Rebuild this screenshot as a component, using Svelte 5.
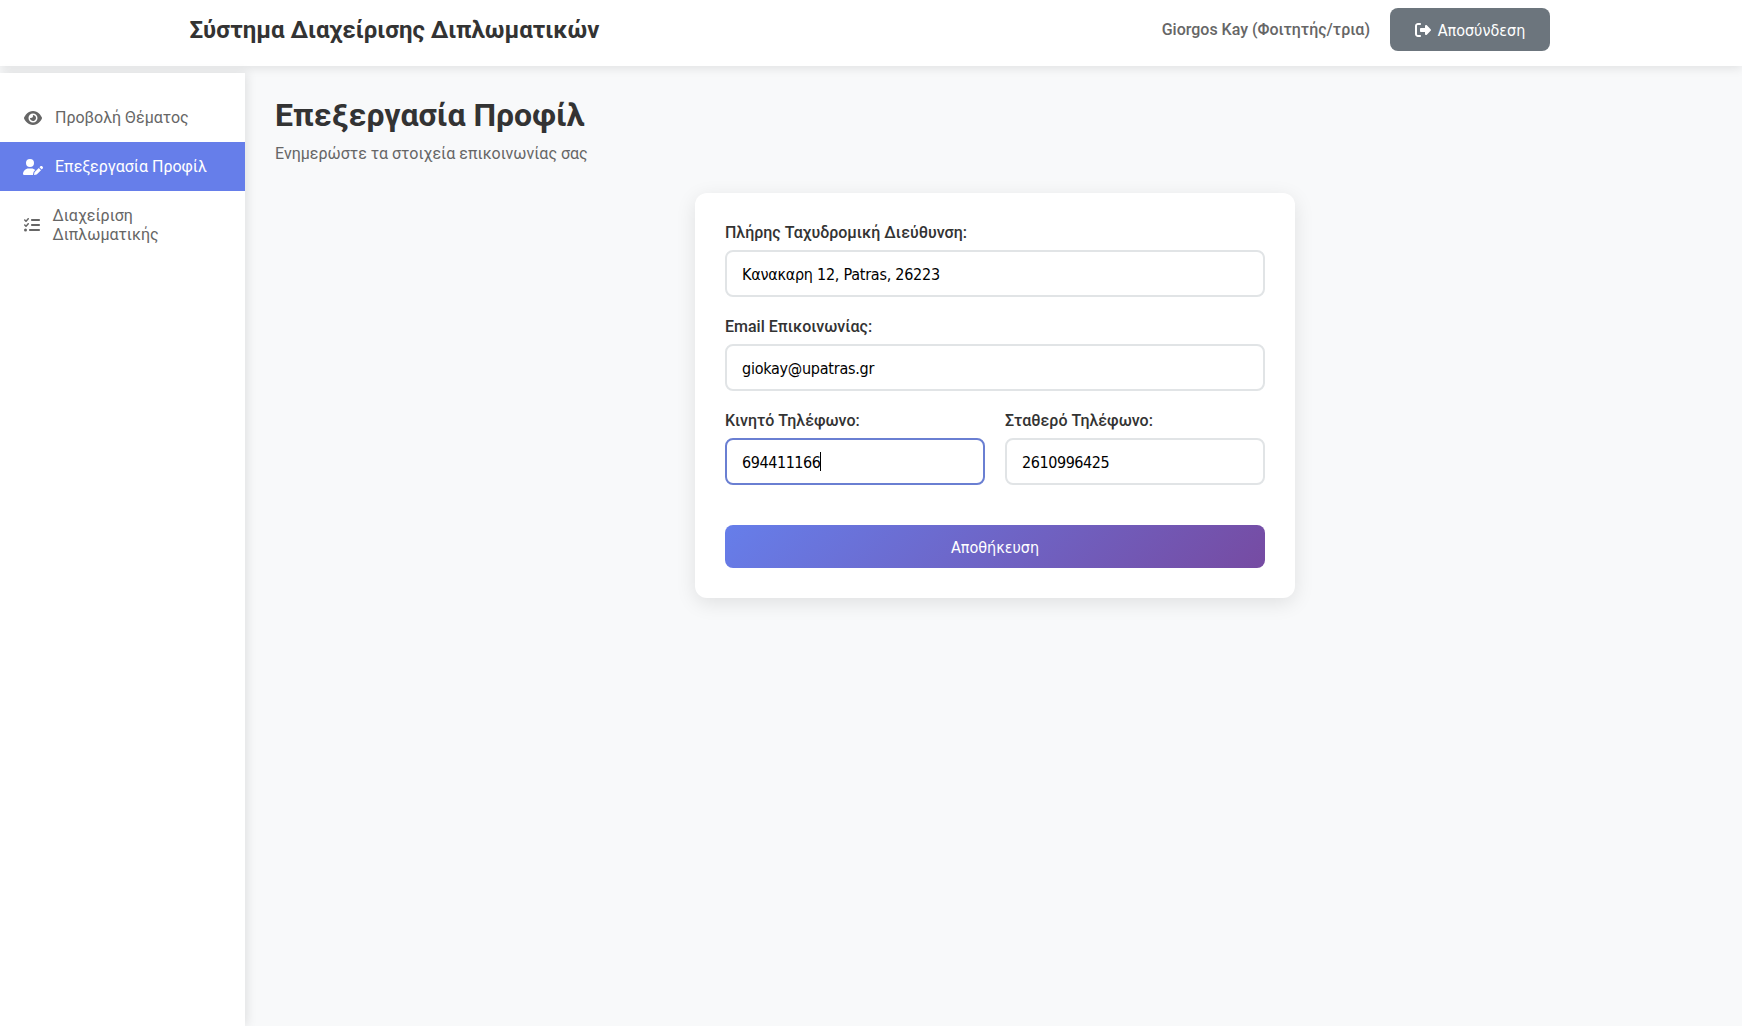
<script>
  const icons = {
    eye: {
      box: '0 0 576 512', w: 18,
      d: 'M288 32c-80.8 0-145.5 36.8-192.6 80.6C48.6 156 17.3 208 2.5 243.7c-3.3 7.9-3.3 16.7 0 24.6C17.3 304 48.6 356 95.4 399.4C142.5 443.2 207.2 480 288 480s145.5-36.8 192.6-80.6c46.8-43.5 78.1-95.4 93-131.1c3.3-7.9 3.3-16.7 0-24.6c-14.9-35.7-46.2-87.7-93-131.1C433.5 68.8 368.8 32 288 32zM144 256a144 144 0 1 1 288 0 144 144 0 1 1 -288 0zm144-64c0 35.3-28.7 64-64 64c-7.1 0-13.9-1.2-20.3-3.3c-5.5-1.8-11.9 1.6-11.7 7.4c.3 6.9 1.3 13.8 3.2 20.7c13.7 51.2 66.4 81.6 117.6 67.9s81.6-66.4 67.9-117.6c-11.1-41.5-47.8-69.4-88.6-71.1c-5.8-.2-9.2 6.1-7.4 11.7c2.1 6.4 3.3 13.2 3.3 20.3z'
    },
    userPen: {
      box: '0 0 640 512', w: 20,
      d: 'M224 256A128 128 0 1 0 224 0a128 128 0 1 0 0 256zm-45.7 48C79.8 304 0 383.8 0 482.3C0 498.7 13.3 512 29.7 512H322.8c-3.1-8.8-3.7-18.4-1.4-27.8l15-60.1c2.8-11.3 8.6-21.5 16.8-29.7l40.3-40.3c-32.1-31-75.7-50.1-123.9-50.1H178.3zm435.5-68.3c-15.6-15.6-40.9-15.6-56.6 0l-29.4 29.4 71 71 29.4-29.4c15.6-15.6 15.6-40.9 0-56.6l-14.4-14.4zM375.9 417c-4.1 4.1-7 9.2-8.4 14.9l-15 60.1c-1.4 5.5 .2 11.2 4.2 15.2s9.7 5.6 15.2 4.2l60.1-15c5.6-1.4 10.8-4.3 14.9-8.4L576.1 358.7l-71-71L375.9 417z'
    },
    list: {
      box: '0 0 512 512', w: 16,
      d: 'M152.1 38.2c9.9 8.9 10.7 24 1.8 33.9l-72 80c-4.4 4.9-10.6 7.8-17.2 7.9s-12.9-2.4-17.6-7L7 113C-2.3 103.6-2.3 88.4 7 79s24.6-9.4 33.9 0l22.1 22.1 55.1-61.2c8.9-9.9 24-10.7 33.9-1.8zm0 160c9.9 8.9 10.7 24 1.8 33.9l-72 80c-4.4 4.9-10.6 7.8-17.2 7.9s-12.9-2.4-17.6-7L7 273c-9.4-9.4-9.4-24.6 0-33.9s24.6-9.4 33.9 0l22.1 22.1 55.1-61.2c8.9-9.9 24-10.7 33.9-1.8zM224 96c0-17.7 14.3-32 32-32H480c17.7 0 32 14.3 32 32s-14.3 32-32 32H256c-17.7 0-32-14.3-32-32zm0 160c0-17.7 14.3-32 32-32H480c17.7 0 32 14.3 32 32s-14.3 32-32 32H256c-17.7 0-32-14.3-32-32zM160 416c0-17.7 14.3-32 32-32H480c17.7 0 32 14.3 32 32s-14.3 32-32 32H192c-17.7 0-32-14.3-32-32zM48 368a48 48 0 1 1 0 96 48 48 0 1 1 0-96z'
    },
    logout: {
      box: '0 0 512 512', w: 16,
      d: 'M377.9 105.9L500.7 228.7c7.2 7.2 11.3 17.1 11.3 27.3s-4.1 20.1-11.3 27.3L377.9 406.1c-6.4 6.4-15 9.9-24 9.9c-18.7 0-33.9-15.2-33.9-33.9l0-62.1-128 0c-17.7 0-32-14.3-32-32l0-64c0-17.7 14.3-32 32-32l128 0 0-62.1c0-18.7 15.2-33.9 33.9-33.9c9 0 17.6 3.6 24 9.9zM160 96L96 96c-17.7 0-32 14.3-32 32l0 256c0 17.7 14.3 32 32 32l64 0c17.7 0 32 14.3 32 32s-14.3 32-32 32l-64 0c-53 0-96-43-96-96L0 128C0 75 43 32 96 32l64 0c17.7 0 32 14.3 32 32s-14.3 32-32 32z'
    }
  };

  const nav = [
    { icon: 'eye', label: 'Προβολή Θέματος' },
    { icon: 'userPen', label: 'Επεξεργασία Προφίλ', active: true },
    { icon: 'list', label: 'Διαχείριση Διπλωματικής', narrow: true }
  ];

  let address = $state('Κανακαρη 12, Patras, 26223');
  let email = $state('giokay@upatras.gr');
  let mobile = $state('694411166');
  let landline = $state('2610996425');
</script>

{#snippet glyph(name)}
  <svg viewBox={icons[name].box} width={icons[name].w} height="16" fill="currentColor" aria-hidden="true">
    <path d={icons[name].d} />
  </svg>
{/snippet}

<div class="page">
  <header>
    <div class="bar">
      <h2>Σύστημα Διαχείρισης Διπλωματικών</h2>
      <div class="user">
        <span class="name">Giorgos Kay (Φοιτητής/τρια)</span>
        <button class="logout">{@render glyph('logout')}<span>Αποσύνδεση</span></button>
      </div>
    </div>
  </header>

  <div class="body">
    <nav>
      {#each nav as item}
        <a href="#top" class:active={item.active}>
          <span class="icon" class:narrow={item.narrow}>{@render glyph(item.icon)}</span>
          <span>{item.label}</span>
        </a>
      {/each}
    </nav>

    <main>
      <h1>Επεξεργασία Προφίλ</h1>
      <p class="sub">Ενημερώστε τα στοιχεία επικοινωνίας σας</p>

      <form class="card">
        <label><span>Πλήρης Ταχυδρομική Διεύθυνση:</span><input class="text" bind:value={address} /></label>
        <label><span>Email Επικοινωνίας:</span><input class="text" bind:value={email} /></label>
        <div class="pair">
          <label>
            <span>Κινητό Τηλέφωνο:</span>
            <div class="focus-wrap">
              <input class="focused" bind:value={mobile} />
              <i class="caret"></i>
            </div>
          </label>
          <label><span>Σταθερό Τηλέφωνο:</span><input bind:value={landline} /></label>
        </div>
        <button type="button" class="save"><span>Αποθήκευση</span></button>
      </form>
    </main>
  </div>
</div>

<style>
  :global(body) { background: #f8f9fa; overflow: hidden; }
  .page, .page * { box-sizing: border-box; }
  .page {
    height: 1026px;
    display: flex;
    flex-direction: column;
    overflow: hidden;
    font-family: Roboto, sans-serif;
    font-size: 16px;
    line-height: 19px;
    color: #333;
    background: #f8f9fa;
  }
  h1, h2, p { margin: 0; }
  svg { display: block; flex: none; }
  header {
    flex: none;
    height: 66px;
    background: #fff;
    box-shadow: 0 2px 10px rgba(0, 0, 0, 0.1);
  }
  .bar {
    width: 1400px;
    margin: 0 auto;
    padding: 8px 21px 0 18.5px;
    display: flex;
    justify-content: space-between;
    align-items: center;
  }
  h2 { font-size: 24px; line-height: 28px; font-weight: 700; }
  .user { display: flex; align-items: center; gap: 20px; }
  .name { font-weight: 500; color: #666; }
  button {
    height: 43px;
    border: 0;
    border-radius: 8px;
    color: #fff;
    display: flex;
    align-items: center;
    justify-content: center;
  }
  button, input {
    font-family: "DejaVu Sans Condensed", "DejaVu Sans", sans-serif;
    font-stretch: condensed;
    font-size: 16px;
    letter-spacing: -0.43px;
  }
  button { letter-spacing: 0; line-height: 19px; }
  button span { padding-top: 2px; }
  .logout { width: 160px; gap: 7px; padding: 0; background: #6c757d; }
  .body { flex: 1; display: flex; padding-top: 7px; }
  nav {
    flex: none;
    width: 245px;
    padding: 20px 0;
    background: #fff;
    box-shadow: 2px 0 10px rgba(0, 0, 0, 0.1);
  }
  nav a {
    display: flex;
    align-items: center;
    gap: 12px;
    padding: 15px 22px 15px 23px;
    color: #666;
    text-decoration: none;
  }
  nav a.active { background: #667eea; color: #fff; }
  .icon { flex: none; width: 20px; display: flex; justify-content: center; }
  .icon.narrow { width: 17.5px; }
  main { flex: 1; padding: 23px 27px 30px 30px; }
  h1 { font-size: 32px; line-height: 38px; font-weight: 700; }
  .sub { margin-top: 10px; color: #666; }
  .card {
    width: 600px;
    margin: 30px auto 0;
    padding: 30px;
    border-radius: 12px;
    background: #fff;
    box-shadow: 0 5px 20px rgba(0, 0, 0, 0.1);
    display: flex;
    flex-direction: column;
    gap: 20px;
  }
  label { display: flex; flex-direction: column; gap: 8px; font-weight: 500; }
  input {
    width: 100%;
    height: 47px;
    padding: 2px 15px 0;
    border: 2px solid #e1e4e6;
    border-radius: 8px;
    outline: none;
    color: #000;
    background: #fff;
  }
  input.text { letter-spacing: -0.25px; }
  input.focused { border-color: #6a7fd2; }
  .focus-wrap { position: relative; display: flex; }
  .caret {
    position: absolute;
    left: 95px;
    top: 14px;
    width: 1px;
    height: 19px;
    background: #000;
  }
  .pair { display: grid; grid-template-columns: 1fr 1fr; gap: 20px; }
  .save {
    width: 100%;
    margin-top: 20px;
    background: linear-gradient(135deg, #667eea 0%, #764ba2 100%);
  }
</style>
